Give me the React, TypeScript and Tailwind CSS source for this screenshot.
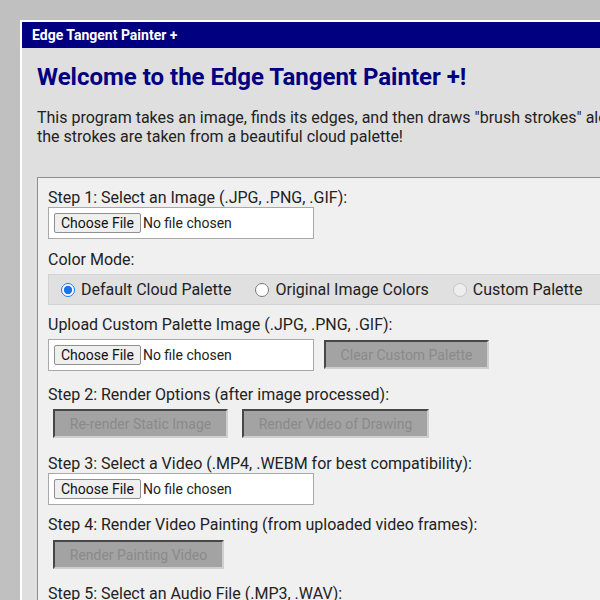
import type { ReactNode } from "react"

const font = { fontFamily: "Roboto, 'Noto Sans', Arial, sans-serif" }

function FileBox() {
  return (
    <input
      type="file"
      className="block w-[266px] h-[32px] border border-[#a9a9a9] bg-white p-[5px] text-sm leading-[20px] text-[#222] file:mr-[2px] file:h-5 file:rounded-[2px] file:border file:border-solid file:border-[#8f8f8f] file:bg-[#efefef] file:px-[6px] file:text-sm file:leading-[18px] file:text-[#111]"
    />
  )
}

function DisabledButton({ children, className = "" }: { children: ReactNode; className?: string }) {
  return (
    <button
      disabled
      className={
        "flex h-[29px] items-center justify-center whitespace-nowrap border-2 border-t-[#474747] border-l-[#474747] border-r-[#cfcfcf] border-b-[#cfcfcf] bg-[#a3a3a3] px-[15px] text-sm text-[#8a8a8a] " +
        className
      }
    >
      {children}
    </button>
  )
}

function Label({ children, className = "" }: { children: ReactNode; className?: string }) {
  return <div className={"whitespace-nowrap text-base leading-[normal] text-[#222] " + className}>{children}</div>
}

function RadioOption({ label, checked, disabled }: { label: string; checked?: boolean; disabled?: boolean }) {
  return (
    <label className="flex items-center gap-[6px] whitespace-nowrap">
      <input
        type="radio"
        name="colorMode"
        defaultChecked={checked}
        disabled={disabled}
        className="h-[14px] w-[14px] accent-[#1a73e8]"
      />
      <span className="text-base leading-[normal] text-[#222]">{label}</span>
    </label>
  )
}

export default function App() {
  return (
    <div className="h-[600px] w-[600px] overflow-hidden bg-[#c0c0c0] pl-5 pt-5" style={font}>
      <div className="w-[660px] border-l-2 border-t-2 border-white bg-[#dfdfdf]">
        <div className="flex h-[26px] items-center bg-[#000080] pl-[10px] text-sm font-bold text-white">
          Edge Tangent Painter +
        </div>
        <div className="px-[15px] pb-6">
          <h1 className="pt-[15px] text-2xl leading-[28px] font-bold whitespace-nowrap text-[#000080]">
            Welcome to the Edge Tangent Painter +!
          </h1>
          <p className="mt-[17px] whitespace-nowrap text-base leading-[normal] text-[#222]">
            This program takes an image, finds its edges, and then draws "brush strokes" along them. The colors of
            <br />
            the strokes are taken from a beautiful cloud palette!
          </p>

          <div className="mt-[31px] border-l border-t border-[#8e8e8e] bg-[#f0f0f0] pb-6 pl-[10px] pt-[10px]">
            <Label>Step 1: Select an Image (.JPG, .PNG, .GIF):</Label>
            <FileBox />

            <Label className="mt-[11px]">Color Mode:</Label>
            <div className="mt-[5px] flex h-[31px] items-center gap-6 border border-[#d2d2d2] bg-[#e0e0e0] pl-3">
              <RadioOption label="Default Cloud Palette" checked />
              <RadioOption label="Original Image Colors" />
              <RadioOption label="Custom Palette" disabled />
            </div>

            <Label className="mt-[10px]">Upload Custom Palette Image (.JPG, .PNG, .GIF):</Label>
            <div className="mt-[5px] flex items-start gap-[10px]">
              <FileBox />
              <DisabledButton className="mt-px w-[165px]">Clear Custom Palette</DisabledButton>
            </div>

            <Label className="mt-[14px]">Step 2: Render Options (after image processed):</Label>
            <div className="mt-[5px] flex gap-[14px] pl-[5px]">
              <DisabledButton className="w-[175px]">Re-render Static Image</DisabledButton>
              <DisabledButton className="w-[187px]">Render Video of Drawing</DisabledButton>
            </div>

            <Label className="mt-[16px]">Step 3: Select a Video (.MP4, .WEBM for best compatibility):</Label>
            <FileBox />

            <Label className="mt-[10px]">Step 4: Render Video Painting (from uploaded video frames):</Label>
            <div className="mt-[6px] pl-[5px]">
              <DisabledButton className="w-[171px]">Render Painting Video</DisabledButton>
            </div>

            <Label className="mt-[15px]">Step 5: Select an Audio File (.MP3, .WAV):</Label>
            <div className="h-10" />
          </div>
        </div>
      </div>
    </div>
  )
}
